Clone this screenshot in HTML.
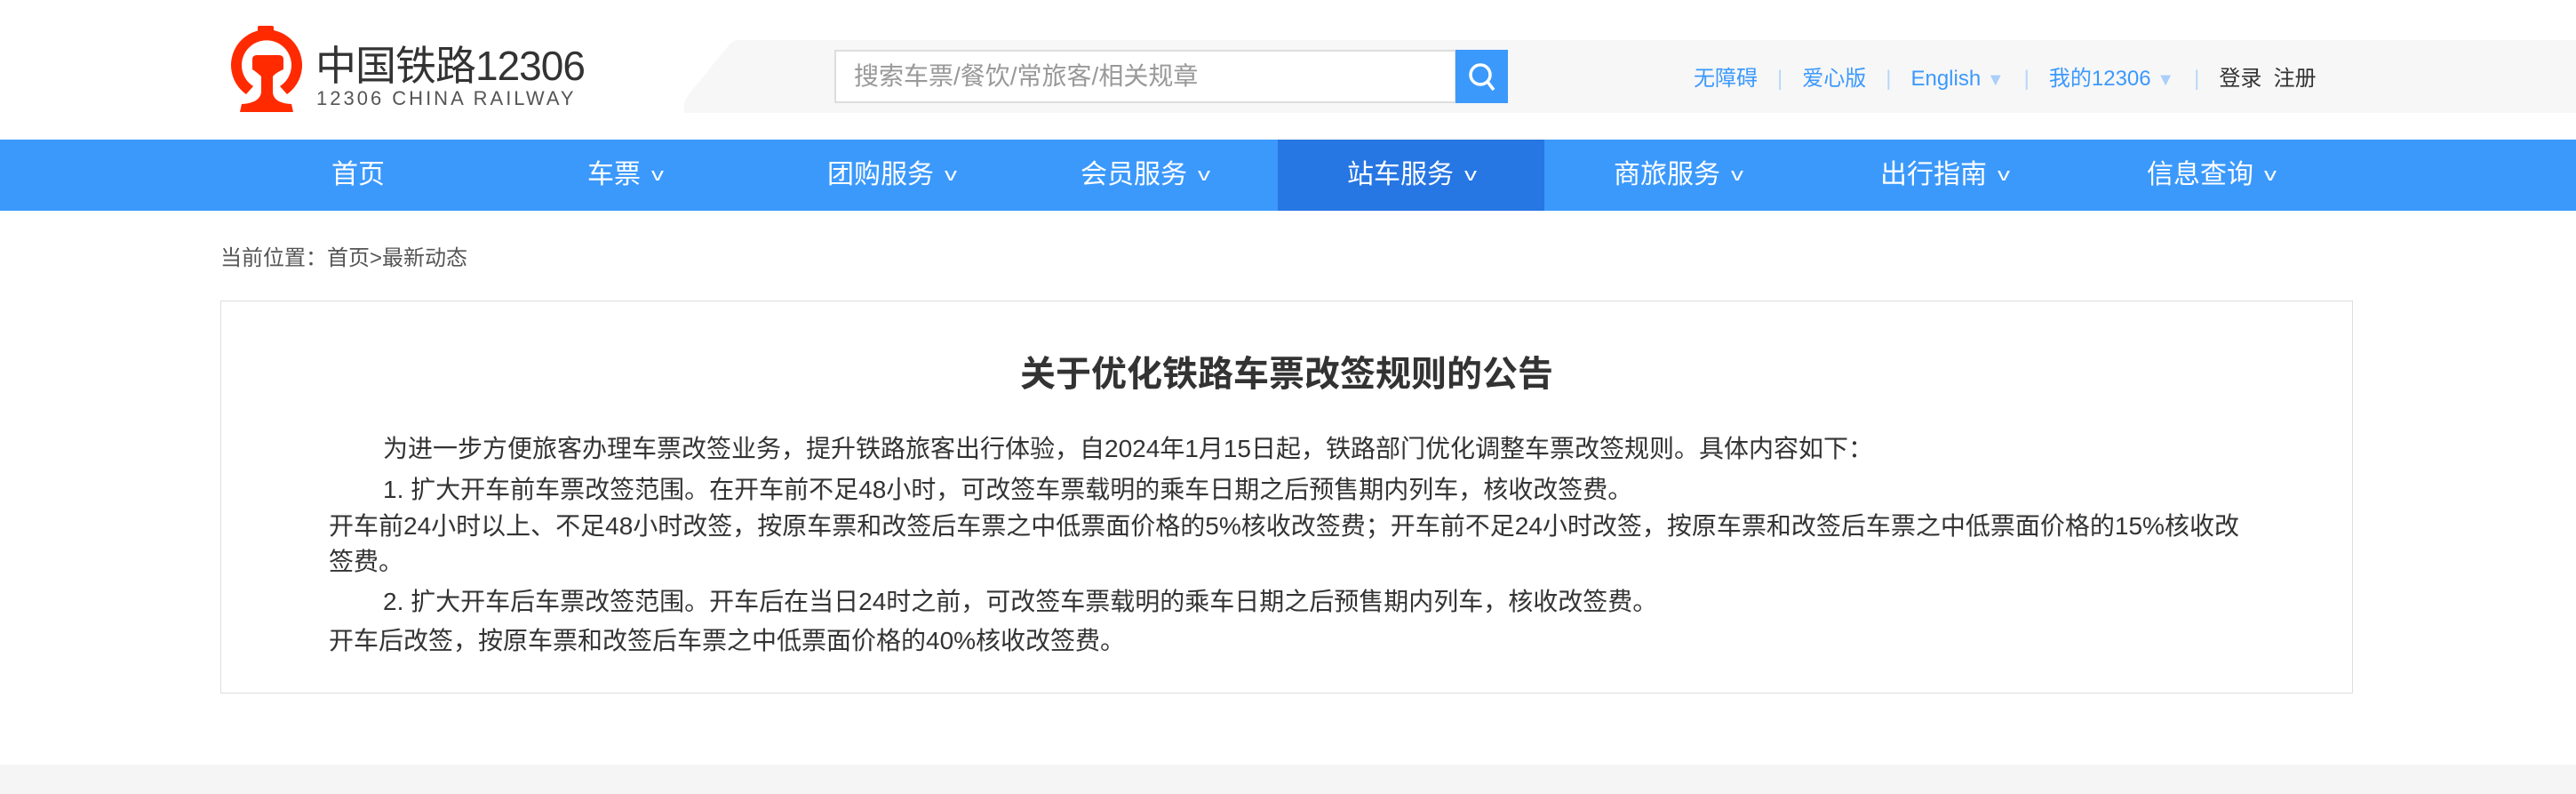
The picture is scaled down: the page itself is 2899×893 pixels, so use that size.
<!DOCTYPE html>
<html><head><meta charset="utf-8"><style>
*{margin:0;padding:0;box-sizing:border-box}
body{width:2899px;height:893px;background:#fff;font-family:"Liberation Sans","Noto Sans CJK SC",sans-serif;position:relative;overflow:hidden;color:#333}
.a{position:absolute;white-space:nowrap}
.nav{position:absolute;left:0;top:157px;width:2899px;height:80px;background:#3b99fc}
.ni{position:absolute;top:0;width:300px;height:80px;line-height:80px;text-align:center;color:#fff;font-size:30px}
.ni.on{background:#2676e3}
.ln{position:absolute;font-size:28px;line-height:40px;color:#333;white-space:nowrap}
.car{display:inline-block;margin-left:14px;font-size:20px;transform:scaleX(1.4) translateY(-3px)}
.sep{color:#b7d7f8;margin:0 22px}
</style></head><body>
<svg class="a" style="left:250px;top:20px" width="110" height="110" viewBox="0 0 110 110">
<path d="M27 86 A40 40 0 1 1 73 86 L65 77 A28 28 0 1 0 35 77 Z" fill="#ff2a00"/>
<rect x="40" y="9" width="18" height="12" rx="2" fill="#ff2a00"/>
<path d="M34 47 Q34 42 39 42 L64 42 Q69 42 69 47 L69 58 Q60 62 57 66 L57 84 Q58 96 78 97 L80 106 L20 106 L22 97 Q42 96 44 84 L44 66 Q40 62 34 58 Z" fill="#ff2a00"/>
</svg>
<div class="a" style="left:355px;top:38px;font-size:46px;color:#333;letter-spacing:-1px">中国铁路12306</div>
<div class="a" style="left:356px;top:98px;font-size:22px;color:#555;letter-spacing:3px">12306 CHINA RAILWAY</div>
<svg class="a" style="left:770px;top:45px" width="2129" height="82"><path d="M60 0 L2129 0 L2129 82 L0 82 Q-2 70 6 60 L50 6 Q55 0 60 0Z" fill="#f7f7f7"/></svg>
<div class="a" style="left:939px;top:56px;width:700px;height:60px;border:2px solid #ddd;background:#fff;font-size:28px;line-height:56px;padding-left:20px;color:#999">搜索车票/餐饮/常旅客/相关规章</div>
<div class="a" style="left:1638px;top:56px;width:59px;height:60px;background:#3b99fc">
<svg width="59" height="60"><circle cx="28" cy="28" r="11" stroke="#fff" stroke-width="3.5" fill="none"/><line x1="36" y1="36" x2="43" y2="45" stroke="#fff" stroke-width="3.5"/></svg></div>
<div class="a" style="left:1906px;top:68px;font-size:24px;color:#3b99fc">无障碍<span class="sep">|</span>爱心版<span class="sep">|</span>English <span style="color:#aacff8;font-size:20px">▼</span><span class="sep">|</span>我的12306 <span style="color:#aacff8;font-size:20px">▼</span><span class="sep">|</span><span style="color:#333">登录&nbsp;&nbsp;注册</span></div>
<div class="nav">
<div class="ni" style="left:253px">首页</div>
<div class="ni" style="left:553px">车票<span class="car">v</span></div>
<div class="ni" style="left:853px">团购服务<span class="car">v</span></div>
<div class="ni" style="left:1138px">会员服务<span class="car">v</span></div>
<div class="ni on" style="left:1438px">站车服务<span class="car">v</span></div>
<div class="ni" style="left:1738px">商旅服务<span class="car">v</span></div>
<div class="ni" style="left:2038px">出行指南<span class="car">v</span></div>
<div class="ni" style="left:2338px">信息查询<span class="car">v</span></div>
</div>
<div class="a" style="left:248px;top:270px;font-size:24px;color:#555">当前位置：首页&gt;最新动态</div>
<div class="a" style="left:248px;top:338px;width:2400px;height:442px;border:1px solid #ddd"></div>
<div class="a" style="left:248px;width:2400px;top:388px;text-align:center;font-size:40px;font-weight:bold;color:#333">关于优化铁路车票改签规则的公告</div>
<div class="ln" style="left:431px;top:485px">为进一步方便旅客办理车票改签业务，提升铁路旅客出行体验，自2024年1月15日起，铁路部门优化调整车票改签规则。具体内容如下：</div>
<div class="ln" style="left:431px;top:531px">1. 扩大开车前车票改签范围。在开车前不足48小时，可改签车票载明的乘车日期之后预售期内列车，核收改签费。</div>
<div class="ln" style="left:370px;top:572px">开车前24小时以上、不足48小时改签，按原车票和改签后车票之中低票面价格的5%核收改签费；开车前不足24小时改签，按原车票和改签后车票之中低票面价格的15%核收改</div>
<div class="ln" style="left:370px;top:612px">签费。</div>
<div class="ln" style="left:431px;top:657px">2. 扩大开车后车票改签范围。开车后在当日24时之前，可改签车票载明的乘车日期之后预售期内列车，核收改签费。</div>
<div class="ln" style="left:370px;top:701px">开车后改签，按原车票和改签后车票之中低票面价格的40%核收改签费。</div>
<div class="a" style="left:0;top:860px;width:2899px;height:33px;background:#f5f5f5"></div>
</body></html>
